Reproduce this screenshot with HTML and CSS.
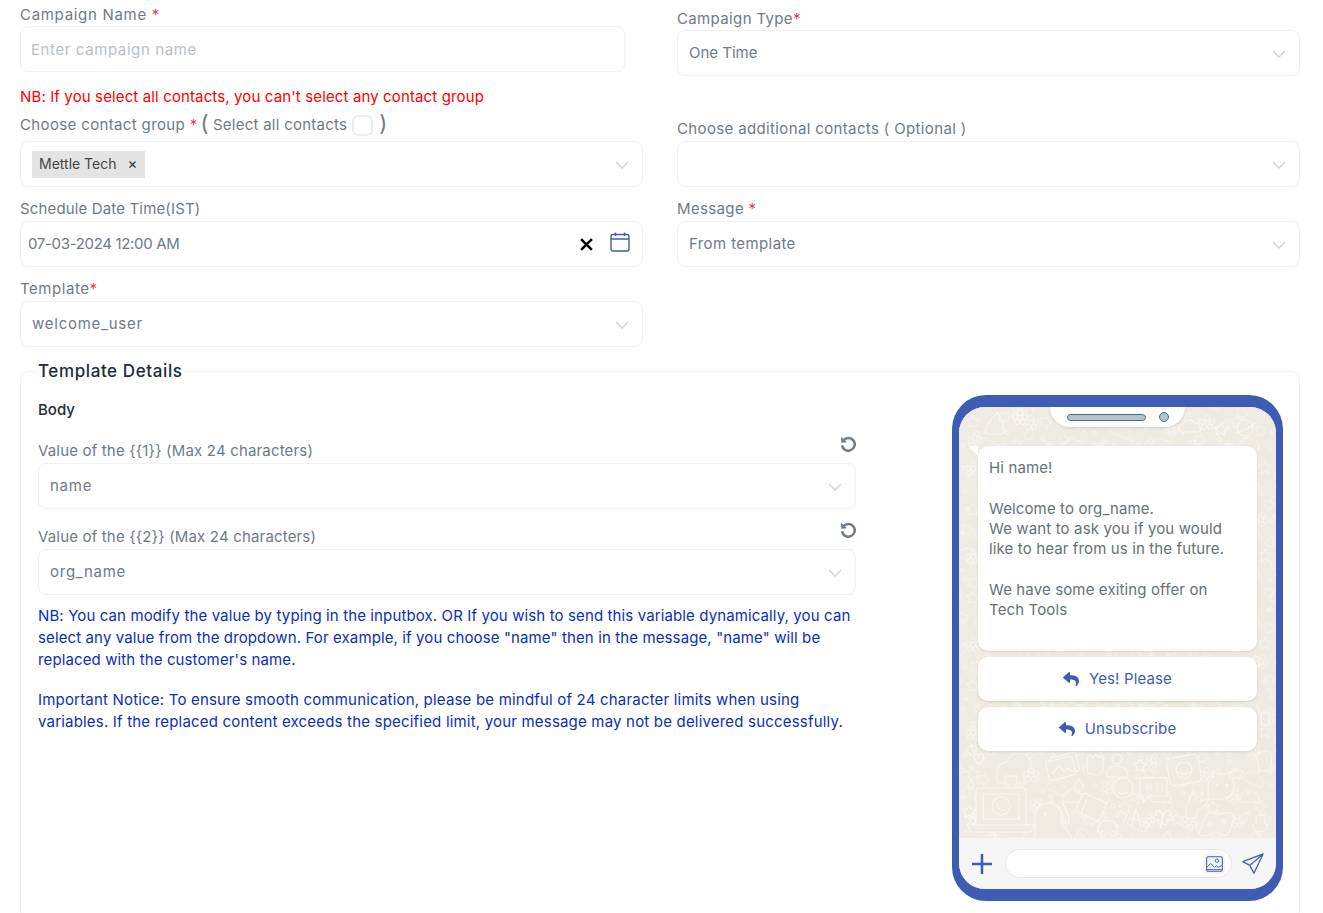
FILE: index.html
```html
<!DOCTYPE html>
<html lang="en">
<head>
<meta charset="utf-8">
<title>Campaign</title>
<link rel="stylesheet" href="styles.css">
</head>
<body>
<svg class="defs" width="0" height="0" aria-hidden="true">
  <defs>
    <symbol id="chev" viewBox="0 0 14 8"><path d="M1 1l6 6 6-6" fill="none" stroke="#c9d3d6" stroke-width="1.3"/></symbol>
    <symbol id="reply" viewBox="0 0 512 512"><path fill="#3f5cb5" d="M8.309 189.836L184.313 37.851C199.719 24.546 224 35.347 224 56.015v80.053c160.629 1.839 288 34.032 288 186.258 0 61.441-39.581 122.309-83.333 154.132-13.653 9.931-33.111-2.533-28.077-18.631 45.344-145.012-21.507-183.51-176.59-185.742V360c0 20.7-24.3 31.453-39.687 18.164l-176.004-152c-11.071-9.562-11.086-26.753 0-36.328z"/></symbol>
    <symbol id="reset" viewBox="0 0 16 16"><path d="M3.400 4.200A6.400 6.400 0 1 1 2 9.200" fill="none" stroke="#6f7b87" stroke-width="2.500"/><path d="M1 .8l.3 6 5.700-.6z" fill="#6f7b87"/></symbol>
  </defs>
</svg>
<main class="page">
  <section class="form-grid">
    <div class="field">
      <label class="label label-flush ls-wide">Campaign Name <span class="req">*</span></label>
      <input class="control control-short" type="text" placeholder="Enter campaign name">
    </div>
    <div class="field field-second">
      <label class="label label-flush">Campaign Type<span class="req">*</span></label>
      <div class="control select val-tight">One Time<svg class="chev"><use href="#chev"/></svg></div>
    </div>

    <div class="field">
      <p class="warn">NB: If you select all contacts, you can't select any contact group</p>
      <div class="label label-check">
        <span>Choose contact group <span class="req">*</span></span>
        <span class="paren paren-open">(</span>
        <span class="select-all">Select all contacts</span>
        <span class="checkbox"></span>
        <span class="paren paren-close">)</span>
      </div>
      <div class="control select select-chip">
        <span class="chip">Mettle Tech<span class="chip-x">×</span></span>
        <svg class="chev"><use href="#chev"/></svg>
      </div>
    </div>
    <div class="field field-bottom">
      <label class="label">Choose additional contacts ( Optional )</label>
      <div class="control select"><svg class="chev"><use href="#chev"/></svg></div>
    </div>

    <div class="field">
      <label class="label ls-tight">Schedule Date Time(IST)</label>
      <div class="control date">
        <span class="date-value">07-03-2024 12:00 AM</span>
        <svg class="date-x" viewBox="0 0 12 12"><path d="M1 1l10 10M11 1L1 11" stroke="#000" stroke-width="2.300"/></svg>
        <svg class="date-cal" viewBox="0 0 20 20"><rect x="1" y="2.500" width="18" height="16.500" rx="2" fill="none" stroke="#3f5cb5" stroke-width="1.400"/><path d="M1 7h18M5.500 .5v3.500M14.500 .5v3.500" stroke="#3f5cb5" stroke-width="1.400"/></svg>
      </div>
    </div>
    <div class="field">
      <label class="label">Message <span class="req">*</span></label>
      <div class="control select">From template<svg class="chev"><use href="#chev"/></svg></div>
    </div>

    <div class="field">
      <label class="label ls-mid">Template<span class="req">*</span></label>
      <div class="control select val-wide">welcome_user<svg class="chev"><use href="#chev"/></svg></div>
    </div>
  </section>

  <fieldset class="details">
    <legend class="details-title">Template Details</legend>
    <div class="details-body">
      <div class="vars">
        <h4 class="body-title">Body</h4>
        <div class="var">
          <div class="var-head"><span>Value of the {{1}} (Max 24 characters)</span><svg class="reset"><use href="#reset"/></svg></div>
          <div class="control select val-wide">name<svg class="chev"><use href="#chev"/></svg></div>
        </div>
        <div class="var">
          <div class="var-head"><span>Value of the {{2}} (Max 24 characters)</span><svg class="reset"><use href="#reset"/></svg></div>
          <div class="control select val-wide">org_name<svg class="chev"><use href="#chev"/></svg></div>
        </div>
        <p class="note">NB: You can modify the value by typing in the inputbox. OR If you wish to send this variable dynamically, you can select any value from the dropdown. For example, if you choose "name" then in the message, "name" will be replaced with the customer's name.</p>
        <p class="note note-wide">Important Notice: To ensure smooth communication, please be mindful of 24 character limits when using variables. If the replaced content exceeds the specified limit, your message may not be delivered successfully.</p>
      </div>

      <div class="phone">
        <div class="screen">
          <svg class="wallpaper" viewBox="0 0 317 431" aria-hidden="true">
            <defs>
              <g id="d-star"><path d="M0-6l2 4 4.500.6-3.200 3.100.8 4.400L0 4l-4.100 2.100.8-4.400L-6.500-1.400-2-2z"/></g>
              <g id="d-heart"><path d="M0 5C-7 0-5-5-2.500-5-1-5 0-4 0-3c0-1 1-2 2.500-2C5-5 7 0 0 5z"/></g>
              <g id="d-drop"><path d="M0-6C3-2 4 0 4 2A4 4 0 0 1-4 2C-4 0-3-2 0-6z"/></g>
              <g id="d-flower"><circle r="2.500"/><circle cy="-5" r="2.500"/><circle cx="5" cy="-1" r="2.500"/><circle cx="3" cy="4" r="2.500"/><circle cx="-3" cy="4" r="2.500"/><circle cx="-5" cy="-1" r="2.500"/></g>
              <g id="d-cloud"><path d="M-9 5a4 4 0 0 1 0-8 6 6 0 0 1 11-1 5 5 0 0 1 6 5 3 3 0 0 1-1 4z"/></g>
              <pattern id="tile" width="88" height="88" patternUnits="userSpaceOnUse">
                <g fill="none" stroke="#f7f5f0" stroke-width="1">
                  <use href="#d-star" x="14" y="14"/><use href="#d-heart" x="46" y="10"/><use href="#d-flower" x="72" y="16"/>
                  <use href="#d-cloud" x="28" y="38"/><use href="#d-drop" x="58" y="38"/><use href="#d-star" x="78" y="48"/>
                  <use href="#d-flower" x="14" y="62"/><use href="#d-star" x="42" y="60"/><use href="#d-heart" x="66" y="70"/>
                  <use href="#d-drop" x="32" y="78"/>
                  <circle cx="4" cy="38" r="2"/><circle cx="48" cy="26" r="1.500"/><circle cx="84" cy="32" r="2"/><circle cx="54" cy="80" r="2"/><circle cx="26" cy="54" r="1.500"/><circle cx="82" cy="82" r="1.500"/><circle cx="58" cy="54" r="1.500"/><circle cx="6" cy="84" r="2"/>
                </g>
              </pattern>
              <pattern id="tile2" href="#tile" patternTransform="translate(37 23) rotate(24)"/>
            </defs>
            <rect width="317" height="431" fill="#efeae2"/>
            <rect width="317" height="431" fill="url(#tile)"/>
            <rect width="317" height="431" fill="url(#tile2)"/>
            <g fill="#efeae2" stroke="#f9f7f3" stroke-width="1.200" stroke-linejoin="round">
              <!-- upper doodles -->
              <path d="M26 24c0-5 4-6 6-11 2-4 6-5 6-8 3 3 3 6 2 8 5 2 5 6 3 8 4 2 3 6-1 6H30c-3 0-4-1-4-3z"/>
              <use href="#d-flower" x="61" y="11"/>
              <use href="#d-cloud" x="233" y="20"/>
              <circle cx="286" cy="21" r="8"/><path d="M275 26c8-1 16-5 22-11"/>
              <use href="#d-star" x="262" y="22"/>
              <!-- dog -->
              <path d="M38 376v-12c0-6 5-9 10-9 1-5 6-9 12-9 7 0 12 5 12 11 0 4-3 8-7 8v11h-7v-7h-12v7z"/>
              <!-- photos -->
              <rect x="92" y="348" width="27" height="19" rx="2" transform="rotate(-14 105 357)"/>
              <rect x="88" y="352" width="27" height="19" rx="2" transform="rotate(-14 101 361)"/>
              <path d="M93 367l7-8 5 5 4-3 5 4"/>
              <!-- hand, person, star -->
              <path d="M128 361v-10l3-4 3 4 3-4 3 4 2-3 2 4v9c0 4-3 7-8 7s-8-3-8-7z"/>
              <circle cx="158" cy="352" r="5"/><path d="M147 370c0-7 5-11 11-11s11 4 11 11z"/>
              <use href="#d-star" x="181" y="358"/>
              <!-- smile card -->
              <rect x="209" y="349" width="32" height="28" rx="5" transform="rotate(-10 225 363)"/>
              <circle cx="225" cy="363" r="8"/><path d="M220 365c3 3 7 3 10 0"/>
              <!-- cat -->
              <path d="M249 392v-13c0-5 3-8 6-9l-2-5 6 2h7l6-2-2 5c3 1 5 5 5 9 0 7-6 13-13 13z"/><circle cx="258" cy="378" r="1"/><circle cx="268" cy="378" r="1"/>
              <!-- emoji + speech -->
              <circle cx="164" cy="381" r="10"/><path d="M159 385c3 2 7 2 10 0"/>
              <path d="M181 371h27v18h-18l-6 7v-7h-3z"/><path d="M188 376v8M192 376v8M188 380h4M198 376v8M203 376v8"/>
              <!-- laptop -->
              <path d="M20 381h44a3 3 0 0 1 3 3v34H17v-34a3 3 0 0 1 3-3zM8 418h68l-4 7H12z"/>
              <path d="M24 387h36v25H24z"/>
              <circle cx="42" cy="399" r="9"/><path d="M38 396c0 4 3 7 8 7"/>
              <path d="M9 379l3-7 3 7-3 4z"/><use href="#d-star" x="10" y="404"/>
              <!-- dino -->
              <path d="M76 431v-20c0-10 6-15 14-15 7 0 12 5 12 11v8c0 3 2 5 5 7l6 9"/>
              <circle cx="86" cy="407" r="1.200"/>
              <path d="M103 395c2 1 2 3 1 4 3 0 3 3 2 4 3 0 3 3 2 4 3 1 3 4 1 5 2 2 2 4 0 5"/>
              <!-- book -->
              <rect x="119" y="390" width="26" height="20" rx="2" transform="rotate(25 132 400)"/>
              <path d="M127 393l-5 14"/>
              <!-- car, letter, clover -->
              <path d="M139 426v-6l4-6h11l4 6v6z"/><circle cx="144" cy="427" r="2.500"/><circle cx="154" cy="427" r="2.500"/>
              <path d="M172 420l5-18 5 18M174 413h6M160 404l8 4-4 8"/>
              <path d="M204 408c-4-9-11-2-6 0-6 0-4 8 2 4-2 6 4 8 4 2 0 6 6 4 4-2 6 4 8-4 2-4 5-2-2-9-6 0z"/><path d="M204 408l-3 14"/>
              <!-- hand with leaves -->
              <path d="M227 400c4-8 6-12 7-14 2 3 2 6 2 8 3-5 6-8 8-9 0 4-1 7-3 10 3-2 6-3 9-3-3 6-7 10-12 11l-1 8h-10z"/>
              <!-- gamepad and mic -->
              <path d="M240 426l6-16c3-6 9-5 12-2l8-2c5-2 10 1 8 7l-4 13c-3 4-7 3-9 0h-10c-3 4-9 4-11 0z"/><circle cx="251" cy="417" r="2"/><circle cx="265" cy="414" r="2"/>
              <rect x="297" y="408" width="9" height="15" rx="4.500"/><path d="M294 417c0 6 3 8 7 8s7-2 7-8M301 425v6"/>
              <use href="#d-heart" x="20" y="352"/><use href="#d-drop" x="120" y="378"/>
              <path d="M12 338l6 3-3 5z"/><rect x="302" y="306" width="8" height="12" rx="2"/>
              <path d="M298 350c3-8 14-8 15 0l-2 14h-11z"/>
            </g>
          </svg>

          <div class="notch"><span class="speaker"></span><span class="camera"></span></div>

          <div class="chat">
            <div class="bubble">
              <span class="tail"></span>
              <p class="msg">Hi name!</p>
              <p class="msg">Welcome to org_name.<br>We want to ask you if you would<br>like to hear from us in the future.</p>
              <p class="msg">We have some exiting offer on<br>Tech Tools</p>
            </div>
            <div class="reply"><svg class="reply-icon"><use href="#reply"/></svg>Yes! Please</div>
            <div class="reply"><svg class="reply-icon"><use href="#reply"/></svg>Unsubscribe</div>
          </div>

          <div class="composer">
            <svg class="plus" viewBox="0 0 20 20"><path d="M10 0v20M0 10h20" stroke="#3f5cb5" stroke-width="2.500"/></svg>
            <div class="composer-input">
              <span class="attach">
                <svg viewBox="0 0 18 17" width="17" height="16"><rect x=".7" y=".7" width="16.600" height="15.600" rx="1.500" fill="none" stroke="#3f5cb5" stroke-width="1.100"/><circle cx="11.500" cy="5" r="1.800" fill="none" stroke="#3f5cb5"/><path d="M1 12l4-4 4 4 2-1.500 2 1.500 4-2M1 14.500h16" fill="none" stroke="#3f5cb5"/></svg>
              </span>
            </div>
            <svg class="send" viewBox="0 0 24 24"><path d="M23 1L1 9.500l7.500 4L13 22zM23 1L8.500 13.500" fill="none" stroke="#3f5cb5" stroke-width="1.400" stroke-linejoin="round"/></svg>
          </div>
        </div>
      </div>
    </div>
  </fieldset>
</main>
</body>
</html>
```
FILE: styles.css
```css
* { box-sizing: border-box; }
html, body { margin: 0; height: 913px; overflow: hidden; background: #fff; }
body { font-family: Inter, "Open Sans", sans-serif; font-size: 15px; line-height: 22px; color: #6f7a86; }
.defs { position: absolute; }
.page { padding: 4px 23px 0 20px; }
.form-grid { display: grid; grid-template-columns: 623px 623px; column-gap: 34px; row-gap: 11px; }
.field { display: flex; flex-direction: column; }
.field-second { padding-top: 4px; }
.field-bottom { justify-content: flex-end; }
.label { display: block; margin-bottom: 1px; letter-spacing: .36px; }
.label-flush { margin-bottom: 0; }
.ls-wide { letter-spacing: .7px; }
.ls-mid { letter-spacing: .55px; }
.ls-tight { letter-spacing: .15px; }
.req { color: #f0384e; }
.warn { margin: -1px 0 6px; color: #f00; letter-spacing: .13px; }
.label-check { display: flex; align-items: center; height: 22px; margin-bottom: 5px; }
.paren { font-size: 22px; line-height: 22px; }
.paren-open { margin: -4px 4px 0 3px; }
.paren-close { margin: -4px 0 0 6px; }
.select-all { letter-spacing: .26px; }
.checkbox { width: 21px; height: 21px; margin-left: 5px; border: 2px solid #e9edf4; border-radius: 6px; }
.control { position: relative; display: flex; align-items: center; width: 100%; height: 46px; padding: 0 12px 0 11px; background: #fff; border: 1px solid #eef0f5; border-radius: 8px; color: #6f7a86; font: inherit; letter-spacing: .4px; }
.val-wide { letter-spacing: .75px; }
.val-tight { letter-spacing: 0; }
.control-short { width: 605px; padding: 0 10px; outline: none; letter-spacing: .6px; }
.control-short::placeholder { color: #b9c0c9; opacity: 1; }
.select { padding-right: 40px; }
.chev { position: absolute; right: 13px; top: 50%; width: 14px; height: 8px; margin-top: -3px; }
.select-chip { padding-left: 11px; }
.chip { display: flex; align-items: center; height: 27px; padding: 0 8px 0 7px; background: #e4e4e4; color: #444; font-size: 14px; letter-spacing: 0; }
.chip-x { margin-left: 11px; color: #333; font-size: 15px; }
.date { padding: 0 12px 0 7px; }
.date-value { flex: 1; letter-spacing: -.33px; }
.date-x { width: 13px; height: 13px; margin-right: 17px; margin-top: 0; }
.date-cal { width: 20px; height: 20px; margin-top: -5px; }
.details { height: 560px; min-width: 0; margin: 12px 0 0; padding: 0 16px 0 17px; border: 1px solid #eff1f5; border-radius: 8px; }
.details-title { padding: 0; color: #212b3a; font-size: 17px; line-height: 24px; font-weight: 500; letter-spacing: .6px; }
.details-body { display: flex; justify-content: space-between; align-items: flex-start; padding-top: 12px; }
.vars { width: 818px; padding-top: 4px; }
.body-title { margin: 0 0 19px; color: #212b3a; font-size: 15px; line-height: 22px; font-weight: 500; }
.var { margin-bottom: 17px; }
.var-head { display: flex; justify-content: space-between; margin-bottom: 1px; letter-spacing: .17px; }
.reset { width: 16px; height: 16px; margin-top: -4px; }
.note { margin: 0 0 18px; color: #0a2fb4; letter-spacing: .12px; }
.note-wide { letter-spacing: .19px; }
.var + .note { margin-top: -7px; }
.phone { width: 331px; height: 506px; flex: none; padding: 12px 7px; background: #3f5cb5; border-radius: 34px; }
.screen { position: relative; display: flex; flex-direction: column; height: 482px; overflow: hidden; background: #efeae2; border-radius: 26px; }
.wallpaper { position: absolute; left: 0; top: 0; width: 317px; height: 431px; }
.notch { position: absolute; left: 91px; top: 0; display: flex; align-items: center; width: 135px; height: 20px; padding-left: 17px; background: #fff; border-radius: 0 0 20px 20px; box-shadow: 0 1px 3px rgba(0,0,0,.12); }
.speaker { width: 79px; height: 7px; background: #b9c3c5; border: 1px solid #37728c; border-radius: 4px; }
.camera { width: 10px; height: 10px; margin-left: 13px; background: #b9c3c5; border: 1px solid #37728c; border-radius: 50%; }
.chat { position: relative; flex: 1; padding: 39px 19px 0; }
.bubble { position: relative; height: 205px; padding: 12px 11px 0; background: #fff; border-radius: 10px; box-shadow: 0 1px 3px rgba(0,0,0,.1); color: #667175; letter-spacing: .13px; line-height: 20.3px; }
.tail { position: absolute; left: -10px; top: 0; border-top: 10px solid #fff; border-left: 10px solid transparent; }
.msg { margin: 0 0 20.3px; }
.reply { display: flex; align-items: center; justify-content: center; height: 44px; margin-top: 6px; background: #fff; border-radius: 10px; box-shadow: 0 1px 3px rgba(0,0,0,.12); color: #3f5cb5; letter-spacing: .15px; }
.reply-icon { width: 16px; height: 16px; margin-right: 10px; }
.composer { position: relative; display: flex; align-items: center; height: 51px; padding: 0 12px 0 13px; background: #f5f5f5; }
.plus { width: 20px; height: 20px; flex: none; }
.composer-input { display: flex; justify-content: flex-end; align-items: center; flex: 1; height: 29px; margin: 0 10px 0 13px; padding-right: 6px; background: #fff; border: 1px solid #e6e6e6; border-radius: 15px; }
.attach { display: flex; align-items: center; justify-content: center; width: 21px; height: 21px; background: #f5f5f5; }
.send { width: 22px; height: 22px; flex: none; }
```
